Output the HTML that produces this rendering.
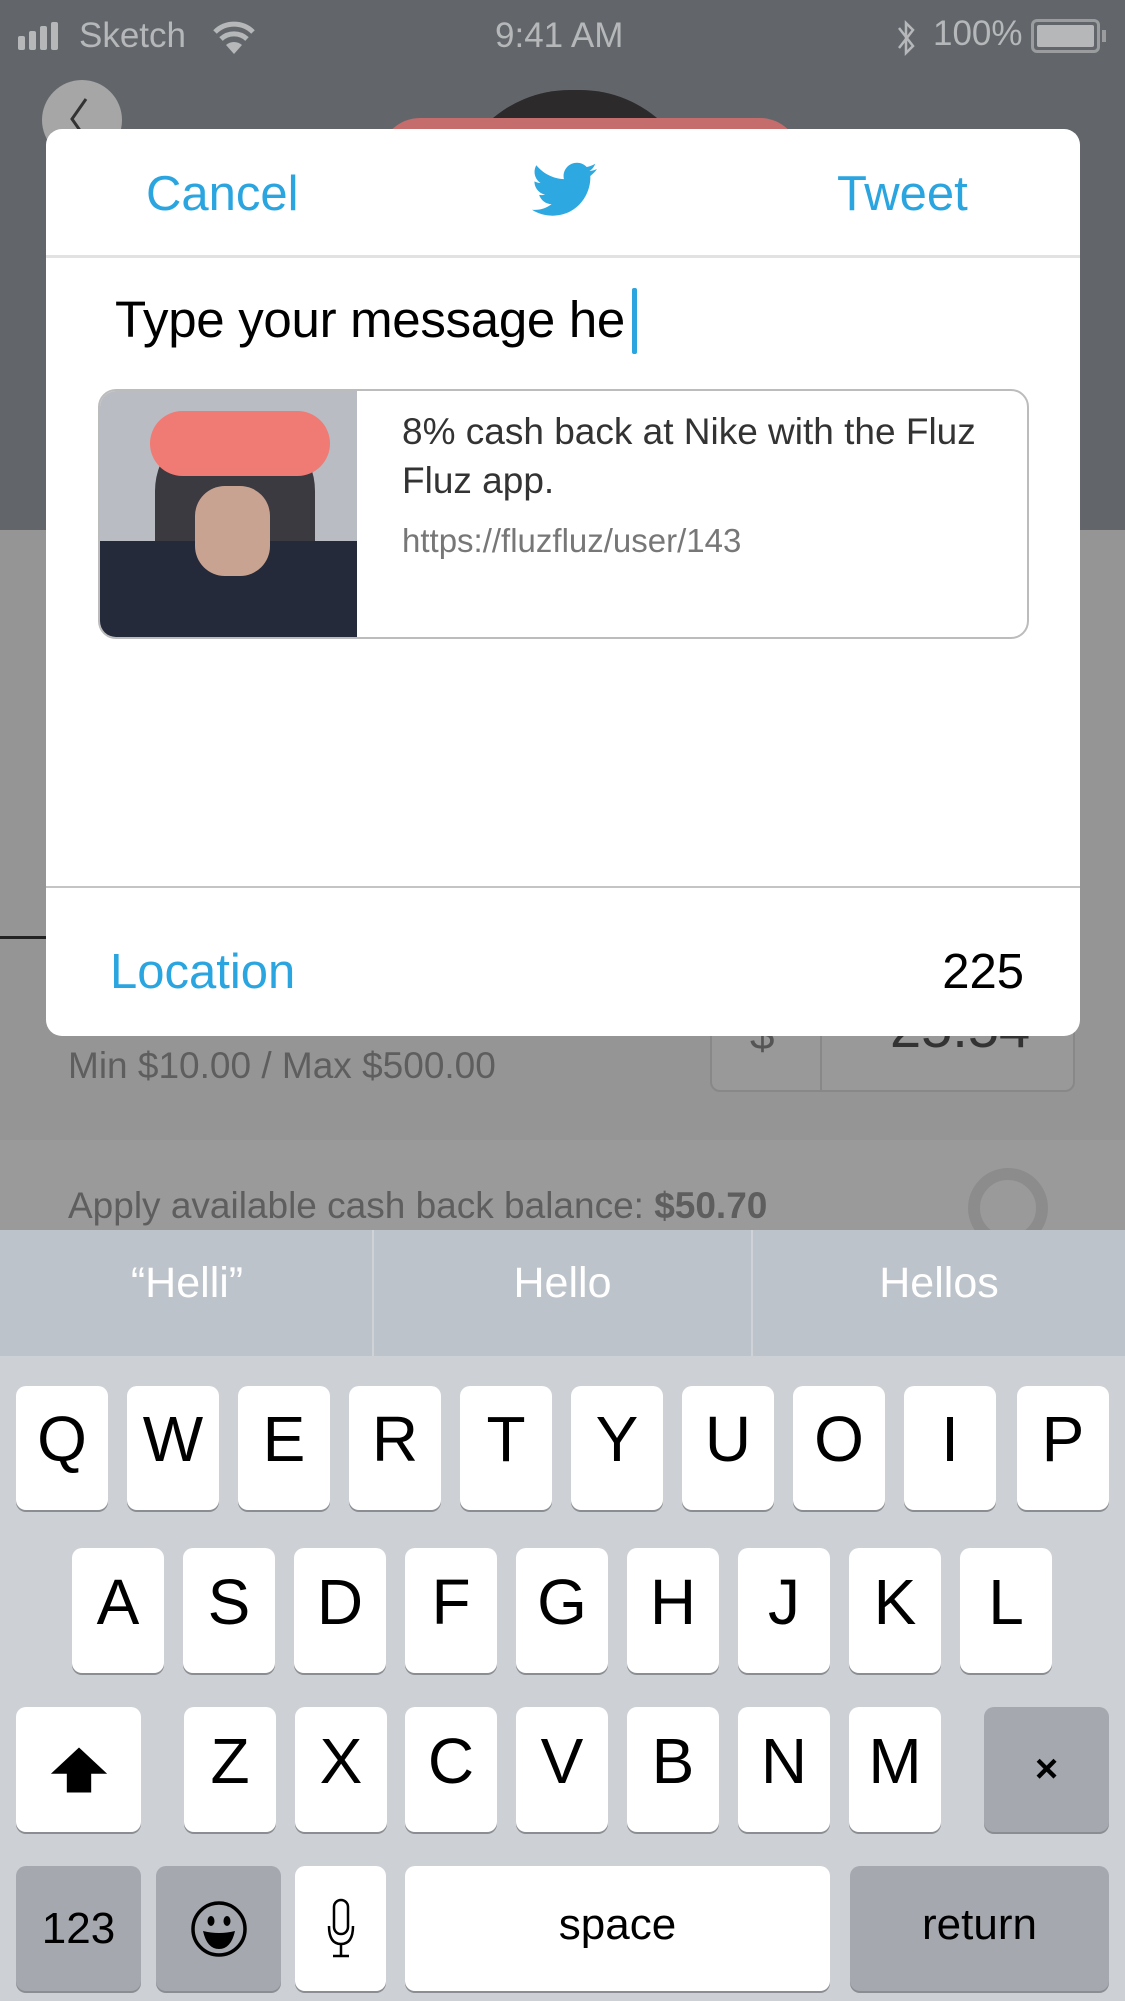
<!DOCTYPE html>
<html><head><meta charset="utf-8"><style>
*{margin:0;padding:0;box-sizing:border-box}
body{width:1125px;height:2001px;overflow:hidden;position:relative;background:#969696;font-family:"Liberation Sans",Helvetica,Arial,sans-serif}
.a{position:absolute}
.key{position:absolute;background:#fff;border-radius:10px;box-shadow:0 2px 0 #8a8d92;display:flex;align-items:center;justify-content:center;font-size:64px;color:#000;padding-bottom:18px}
.g{background:#a5a8ae}
</style></head><body>
<!-- background -->
<div class="a" style="left:0;top:0;width:1125px;height:530px;background:#62666b"></div>
<div class="a" style="left:450px;top:90px;width:250px;height:160px;border-radius:120px 120px 0 0;background:#2c2a2b"></div>
<div class="a" style="left:640px;top:140px;width:40px;height:80px;border-radius:20px;background:#b79a8c"></div>
<div class="a" style="left:380px;top:118px;width:420px;height:60px;border-radius:40px 40px 0 0;background:#c56c6c"></div>
<div class="a" style="left:42px;top:80px;width:80px;height:80px;border-radius:50%;background:#a6a6a6"></div>
<svg class="a" style="left:64px;top:95px" width="30" height="50"><path d="M22 4 L8 24 L22 44" stroke="#333" stroke-width="3" fill="none"/></svg>
<div class="a" style="left:0;top:530px;width:1125px;height:610px;background:#959595"></div>
<div class="a" style="left:0;top:936px;width:46px;height:3px;background:#222"></div>
<div class="a" style="left:0;top:1140px;width:1125px;height:90px;background:#9a9a9a"></div>
<div class="a" style="left:68px;top:1045px;font-size:37px;color:#5e5e5e">Min $10.00 / Max $500.00</div>
<div class="a" style="left:710px;top:1000px;width:365px;height:92px;border:2px solid #888;border-radius:10px;background:#999"></div>
<div class="a" style="left:820px;top:1000px;width:2px;height:92px;background:#888"></div>
<div class="a" style="left:750px;top:1010px;font-size:44px;color:#555">$</div>
<div class="a" style="left:890px;top:995px;font-size:56px;color:#333">25.54</div>
<div class="a" style="left:68px;top:1185px;font-size:37px;color:#5e5e5e">Apply available cash back balance: <b>$50.70</b></div>
<div class="a" style="left:968px;top:1168px;width:80px;height:80px;border-radius:50%;border:12px solid #8c8c8c"></div>
<!-- status bar -->
<svg class="a" style="left:18px;top:22px" width="50" height="30"><rect x="0" y="14" width="7" height="14" rx="2" fill="#b5b7b9"/><rect x="11" y="9" width="7" height="19" rx="2" fill="#b5b7b9"/><rect x="22" y="4" width="7" height="24" rx="2" fill="#b5b7b9"/><rect x="33" y="0" width="7" height="28" rx="2" fill="#b5b7b9"/></svg>
<div class="a" style="left:79px;top:16px;font-size:35px;color:#b5b7b9">Sketch</div>
<svg class="a" style="left:212px;top:20px" width="44" height="36" viewBox="0 0 44 36"><path d="M22 34 L14 25 A12 12 0 0 1 30 25 Z" fill="#b5b7b9"/><path d="M9 19 A19 19 0 0 1 35 19" stroke="#b5b7b9" stroke-width="5" fill="none"/><path d="M3 12 A27 27 0 0 1 41 12" stroke="#b5b7b9" stroke-width="5" fill="none"/></svg>
<div class="a" style="left:495px;top:16px;font-size:35px;color:#b5b7b9">9:41 AM</div>
<svg class="a" style="left:895px;top:18px" width="22" height="40"><path d="M4 10 L18 28 L11 35 L11 5 L18 12 L4 30" stroke="#b5b7b9" stroke-width="2.5" fill="none"/></svg>
<div class="a" style="left:933px;top:14px;font-size:35px;color:#b5b7b9">100%</div>
<div class="a" style="left:1031px;top:19px;width:69px;height:34px;border:3px solid #9a9c9e;border-radius:6px;padding:3px"><div style="width:100%;height:100%;background:#b5b7b9;border-radius:2px"></div></div>
<div class="a" style="left:1102px;top:30px;width:4px;height:12px;background:#9a9c9e"></div>
<!-- modal -->
<div class="a" style="left:46px;top:129px;width:1034px;height:907px;background:#fff;border-radius:16px"></div>
<div class="a" style="left:146px;top:166px;font-size:49px;color:#2aa5e0">Cancel</div>
<div class="a" style="left:837px;top:166px;font-size:49px;color:#2aa5e0">Tweet</div>
<svg class="a" style="left:532px;top:161px" width="66" height="58" viewBox="1 2.5 23 19.5"><path fill="#2ea8e0" d="M23.643 4.937c-.835.37-1.732.62-2.675.733.962-.576 1.7-1.49 2.048-2.578-.9.534-1.897.922-2.958 1.13-.85-.904-2.06-1.47-3.4-1.47-2.572 0-4.658 2.086-4.658 4.66 0 .364.042.718.12 1.06-3.873-.195-7.304-2.05-9.602-4.868-.4.69-.63 1.490-.63 2.342 0 1.616.823 3.043 2.072 3.878-.764-.025-1.482-.234-2.11-.583v.06c0 2.257 1.605 4.14 3.737 4.568-.392.106-.803.162-1.227.162-.3 0-.593-.028-.877-.082.593 1.85 2.313 3.198 4.352 3.234-1.595 1.25-3.604 1.995-5.786 1.995-.376 0-.747-.022-1.112-.065 2.062 1.323 4.51 2.093 7.14 2.093 8.57 0 13.255-7.098 13.255-13.254 0-.2-.005-.402-.014-.602.91-.658 1.7-1.477 2.323-2.41z"/></svg>
<div class="a" style="left:46px;top:255px;width:1034px;height:3px;background:#e2e2e2"></div>
<div class="a" style="left:115px;top:290px;font-size:51px;color:#000;letter-spacing:-0.3px">Type your message he</div>
<div class="a" style="left:632px;top:288px;width:5px;height:66px;background:#2aa5e0;border-radius:2px"></div>
<div class="a" style="left:98px;top:389px;width:931px;height:250px;border:2px solid #bcbcbc;border-radius:18px;overflow:hidden">
 <div class="a" style="left:0;top:0;width:257px;height:250px;background:#b9bcc2"></div>
 <div class="a" style="left:55px;top:30px;width:160px;height:220px;background:#3a3a40;border-radius:70px 70px 0 0"></div>
 <div class="a" style="left:0;top:150px;width:257px;height:100px;background:#252a3a"></div>
 <div class="a" style="left:95px;top:95px;width:75px;height:90px;background:#c9a391;border-radius:30px"></div>
 <div class="a" style="left:50px;top:20px;width:180px;height:65px;background:#f07a74;border-radius:35px"></div>
 <div class="a" style="left:302px;top:16px;font-size:37px;line-height:49px;color:#333;width:620px">8% cash back at Nike with the Fluz Fluz app.</div>
 <div class="a" style="left:302px;top:131px;font-size:33px;color:#777">https://fluzfluz/user/143</div>
</div>
<div class="a" style="left:46px;top:886px;width:1034px;height:2px;background:#c4c4c4"></div>
<div class="a" style="left:110px;top:944px;font-size:49px;color:#2aa5e0">Location</div>
<div class="a" style="right:101px;top:944px;font-size:49px;color:#000">225</div>
<!-- keyboard -->
<div class="a" style="left:0;top:1230px;width:1125px;height:126px;background:#bdc3ca"></div>
<div class="a" style="left:372px;top:1230px;width:2px;height:126px;background:#cfd3d8"></div>
<div class="a" style="left:751px;top:1230px;width:2px;height:126px;background:#cfd3d8"></div>
<div class="a" style="left:0;top:1259px;width:374px;text-align:center;font-size:43px;color:#fff">“Helli”</div>
<div class="a" style="left:374px;top:1259px;width:377px;text-align:center;font-size:43px;color:#fff">Hello</div>
<div class="a" style="left:753px;top:1259px;width:372px;text-align:center;font-size:43px;color:#fff">Hellos</div>
<div class="a" style="left:0;top:1356px;width:1125px;height:645px;background:#cdd0d5"></div>
<div class="key" style="left:16px;top:1386px;width:92px;height:124px">Q</div>
<div class="key" style="left:127px;top:1386px;width:92px;height:124px">W</div>
<div class="key" style="left:238px;top:1386px;width:92px;height:124px">E</div>
<div class="key" style="left:349px;top:1386px;width:92px;height:124px">R</div>
<div class="key" style="left:460px;top:1386px;width:92px;height:124px">T</div>
<div class="key" style="left:571px;top:1386px;width:92px;height:124px">Y</div>
<div class="key" style="left:682px;top:1386px;width:92px;height:124px">U</div>
<div class="key" style="left:793px;top:1386px;width:92px;height:124px">O</div>
<div class="key" style="left:904px;top:1386px;width:92px;height:124px">I</div>
<div class="key" style="left:1017px;top:1386px;width:92px;height:124px">P</div>
<div class="key" style="left:72px;top:1548px;width:92px;height:125px">A</div>
<div class="key" style="left:183px;top:1548px;width:92px;height:125px">S</div>
<div class="key" style="left:294px;top:1548px;width:92px;height:125px">D</div>
<div class="key" style="left:405px;top:1548px;width:92px;height:125px">F</div>
<div class="key" style="left:516px;top:1548px;width:92px;height:125px">G</div>
<div class="key" style="left:627px;top:1548px;width:92px;height:125px">H</div>
<div class="key" style="left:738px;top:1548px;width:92px;height:125px">J</div>
<div class="key" style="left:849px;top:1548px;width:92px;height:125px">K</div>
<div class="key" style="left:960px;top:1548px;width:92px;height:125px">L</div>
<div class="key" style="left:16px;top:1707px;width:125px;height:125px;padding:0"><svg width="60" height="50" viewBox="0 0 64 52"><path d="M32 2 L62 30 L45 30 L45 50 L19 50 L19 30 L2 30 Z" fill="#000"/></svg></div>
<div class="key" style="left:184px;top:1707px;width:92px;height:125px">Z</div>
<div class="key" style="left:295px;top:1707px;width:92px;height:125px">X</div>
<div class="key" style="left:405px;top:1707px;width:92px;height:125px">C</div>
<div class="key" style="left:516px;top:1707px;width:92px;height:125px">V</div>
<div class="key" style="left:627px;top:1707px;width:92px;height:125px">B</div>
<div class="key" style="left:738px;top:1707px;width:92px;height:125px">N</div>
<div class="key" style="left:849px;top:1707px;width:92px;height:125px">M</div>
<div class="key g" style="left:984px;top:1707px;width:125px;height:125px;font-size:40px;padding:0;font-weight:bold">×</div>
<div class="key g" style="left:16px;top:1866px;width:125px;height:125px;font-size:44px;padding:0">123</div>
<div class="key g" style="left:156px;top:1866px;width:125px;height:125px;padding:0"><svg width="60" height="60" viewBox="0 0 60 60"><circle cx="30" cy="30" r="26" fill="none" stroke="#000" stroke-width="3.5"/><ellipse cx="22" cy="22" rx="3.5" ry="5"/><ellipse cx="38" cy="22" rx="3.5" ry="5"/><path d="M14 32 Q30 36 46 32 Q42 50 30 50 Q18 50 14 32 Z" fill="#000"/></svg></div>
<div class="key" style="left:295px;top:1866px;width:91px;height:125px;padding:0"><svg width="30" height="62" viewBox="0 0 30 62"><rect x="8" y="2" width="14" height="34" rx="7" fill="none" stroke="#000" stroke-width="2.5"/><path d="M3 28 Q3 46 15 46 Q27 46 27 28" fill="none" stroke="#000" stroke-width="2.5"/><path d="M15 46 V58 M7 58 H23" stroke="#000" stroke-width="2.5"/></svg></div>
<div class="key" style="left:405px;top:1866px;width:425px;height:125px;font-size:44px;padding:0 0 8px">space</div>
<div class="key g" style="left:850px;top:1866px;width:259px;height:125px;font-size:44px;padding:0 0 8px">return</div>
</body></html>
